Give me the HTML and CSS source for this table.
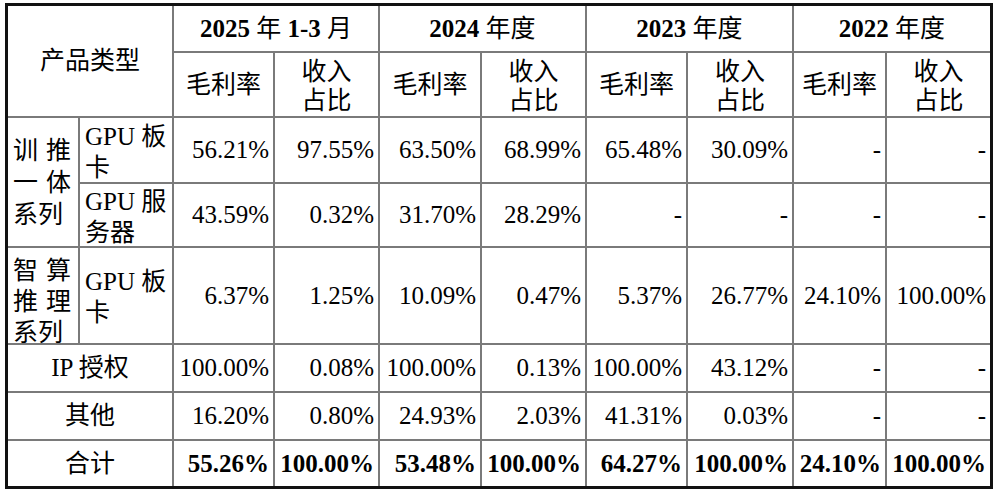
FILE: index.html
```html
<!DOCTYPE html>
<html lang="zh-CN">
<head>
<meta charset="utf-8">
<title>产品类型毛利率及收入占比</title>
<link rel="stylesheet" href="styles.css">
</head>
<body>
<div class="sheet">
  <div class="cell head corner">产品类型</div>
  <div class="cell head year span2"><b>2025</b> 年 <b>1-3</b> 月</div>
  <div class="cell head year span2"><b>2024</b> 年度</div>
  <div class="cell head year span2"><b>2023</b> 年度</div>
  <div class="cell head year span2"><b>2022</b> 年度</div>

  <div class="cell head">毛利率</div>
  <div class="cell head two">收入<br>占比</div>
  <div class="cell head">毛利率</div>
  <div class="cell head two">收入<br>占比</div>
  <div class="cell head">毛利率</div>
  <div class="cell head two">收入<br>占比</div>
  <div class="cell head">毛利率</div>
  <div class="cell head two">收入<br>占比</div>

  <div class="cell group rows2">
    <div class="glines">
      <span class="jl"><span>训</span><span>推</span></span>
      <span class="jl"><span>一</span><span>体</span></span>
      <span class="ll">系列</span>
    </div>
  </div>
  <div class="cell sub">GPU 板<br>卡</div>
  <div class="cell num">56.21%</div>
  <div class="cell num">97.55%</div>
  <div class="cell num">63.50%</div>
  <div class="cell num">68.99%</div>
  <div class="cell num">65.48%</div>
  <div class="cell num">30.09%</div>
  <div class="cell num">-</div>
  <div class="cell num">-</div>

  <div class="cell sub">GPU 服<br>务器</div>
  <div class="cell num">43.59%</div>
  <div class="cell num">0.32%</div>
  <div class="cell num">31.70%</div>
  <div class="cell num">28.29%</div>
  <div class="cell num">-</div>
  <div class="cell num">-</div>
  <div class="cell num">-</div>
  <div class="cell num">-</div>

  <div class="cell group top">
    <div class="glines">
      <span class="jl"><span>智</span><span>算</span></span>
      <span class="jl"><span>推</span><span>理</span></span>
      <span class="ll">系列</span>
    </div>
  </div>
  <div class="cell sub">GPU 板<br>卡</div>
  <div class="cell num">6.37%</div>
  <div class="cell num">1.25%</div>
  <div class="cell num">10.09%</div>
  <div class="cell num">0.47%</div>
  <div class="cell num">5.37%</div>
  <div class="cell num">26.77%</div>
  <div class="cell num">24.10%</div>
  <div class="cell num">100.00%</div>

  <div class="cell label span2">IP 授权</div>
  <div class="cell num">100.00%</div>
  <div class="cell num">0.08%</div>
  <div class="cell num">100.00%</div>
  <div class="cell num">0.13%</div>
  <div class="cell num">100.00%</div>
  <div class="cell num">43.12%</div>
  <div class="cell num">-</div>
  <div class="cell num">-</div>

  <div class="cell label span2">其他</div>
  <div class="cell num">16.20%</div>
  <div class="cell num">0.80%</div>
  <div class="cell num">24.93%</div>
  <div class="cell num">2.03%</div>
  <div class="cell num">41.31%</div>
  <div class="cell num">0.03%</div>
  <div class="cell num">-</div>
  <div class="cell num">-</div>

  <div class="cell label span2">合计</div>
  <div class="cell num bold">55.26%</div>
  <div class="cell num bold">100.00%</div>
  <div class="cell num bold">53.48%</div>
  <div class="cell num bold">100.00%</div>
  <div class="cell num bold">64.27%</div>
  <div class="cell num bold">100.00%</div>
  <div class="cell num bold">24.10%</div>
  <div class="cell num bold">100.00%</div>
</div>
</body>
</html>
```

FILE: styles.css
```css
html, body {
  margin: 0;
  padding: 0;
  background: #ffffff;
}

body {
  font-family: "Liberation Serif", "Noto Sans CJK SC", serif;
  font-size: 25px;
  color: #000000;
}

.sheet {
  display: grid;
  grid-template-columns: 70px 92px 99px 103px 100px 103px 99px 104px 91px 103px;
  grid-template-rows: 45px 63px 64px 62px 95px 46px 46px 45px;
  gap: 2px;
  background: #7a7a7a;
  border: 3px solid #111111;
  width: max-content;
  margin: 3px 0 0 5px;
}

.cell {
  background: #ffffff;
  display: flex;
  align-items: center;
  line-height: 30px;
  overflow: visible;
  white-space: nowrap;
}

.head {
  justify-content: center;
  text-align: center;
}

.head.two {
  line-height: 29px;
  padding-top: 2px;
}

.corner {
  grid-column: span 2;
  grid-row: span 2;
}

.span2 {
  grid-column: span 2;
}

.year b {
  font-weight: 700;
}

.year {
  white-space: pre;
}

.group {
  align-items: center;
  padding: 2px 7px 0 5px;
}

.rows2 {
  grid-row: span 2;
}

.group.top {
  align-items: flex-start;
  padding-top: 7px;
}

.glines {
  display: flex;
  flex-direction: column;
  width: 100%;
  line-height: 32px;
}

.group.top .glines {
  line-height: 31px;
}

.jl {
  display: flex;
  justify-content: space-between;
}

.ll {
  display: block;
}

.sub {
  padding-left: 5px;
  line-height: 31px;
  padding-top: 3px;
}

.label {
  justify-content: center;
}

.num {
  justify-content: flex-end;
  padding-right: 4px;
}

.bold {
  font-weight: 700;
}
```
